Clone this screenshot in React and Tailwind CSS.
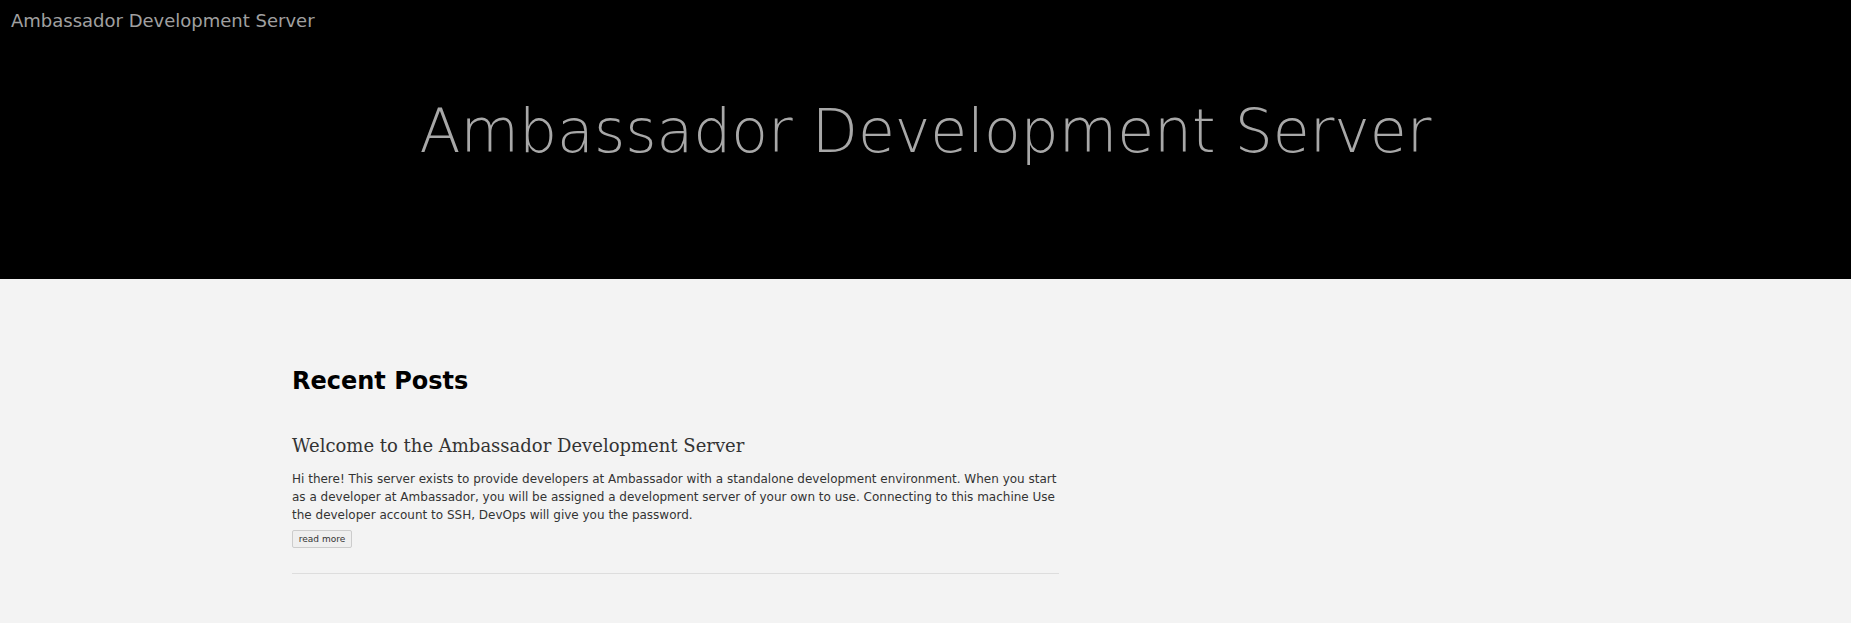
import React from 'react';

// 記事データ
const posts = [
  {
    id: 1,
    title: 'Welcome to the Ambassador Development Server',
    excerpt:
      'Hi there! This server exists to provide developers at Ambassador with a standalone development environment. When you start as a developer at Ambassador, you will be assigned a development server of your own to use. Connecting to this machine Use the developer account to SSH, DevOps will give you the password.',
  },
];

const PostItem = ({ post }) => (
  <div className="mt-[39px] border-b border-[#dddddd] pb-[25px]">
    <h3 className="font-['DejaVu_Serif',serif] text-[18px] leading-[24px] text-[#333333] font-normal">
      {post.title}
    </h3>
    <p className="mt-[12px] font-['DejaVu_Sans',sans-serif] text-[12px] leading-[18px] text-[#333333]">
      {post.excerpt}
    </p>
    <button className="mt-[5px] h-[18px] w-[60px] rounded-[2px] border border-[#cccccc] bg-[#efefef] font-['DejaVu_Sans',sans-serif] text-[9px] leading-[16px] text-[#333333]">
      read more
    </button>
  </div>
);

export default function App() {
  return (
    <div className="min-h-screen bg-[#f3f3f3]">
      {/* ヘッダー */}
      <header className="h-[279px] bg-black">
        <div className="pt-[9px] pl-[11px] font-['DejaVu_Sans',sans-serif] text-[18px] leading-[24px] text-[#a0a0a0]">
          Ambassador Development Server
        </div>
        <h1 className="mt-[68px] text-center font-['DejaVu_Sans',sans-serif] text-[60px] font-extralight leading-none text-[#a8a8a8]">
          Ambassador Development Server
        </h1>
      </header>

      {/* 本文 */}
      <main className="pl-[292px] pt-[88px]">
        <div className="w-[767px]">
          <h2 className="font-['DejaVu_Sans',sans-serif] text-[24px] font-bold leading-[28px] text-black">
            Recent Posts
          </h2>
          {posts.map(post => (
            <PostItem key={post.id} post={post} />
          ))}
        </div>
      </main>
    </div>
  );
}
